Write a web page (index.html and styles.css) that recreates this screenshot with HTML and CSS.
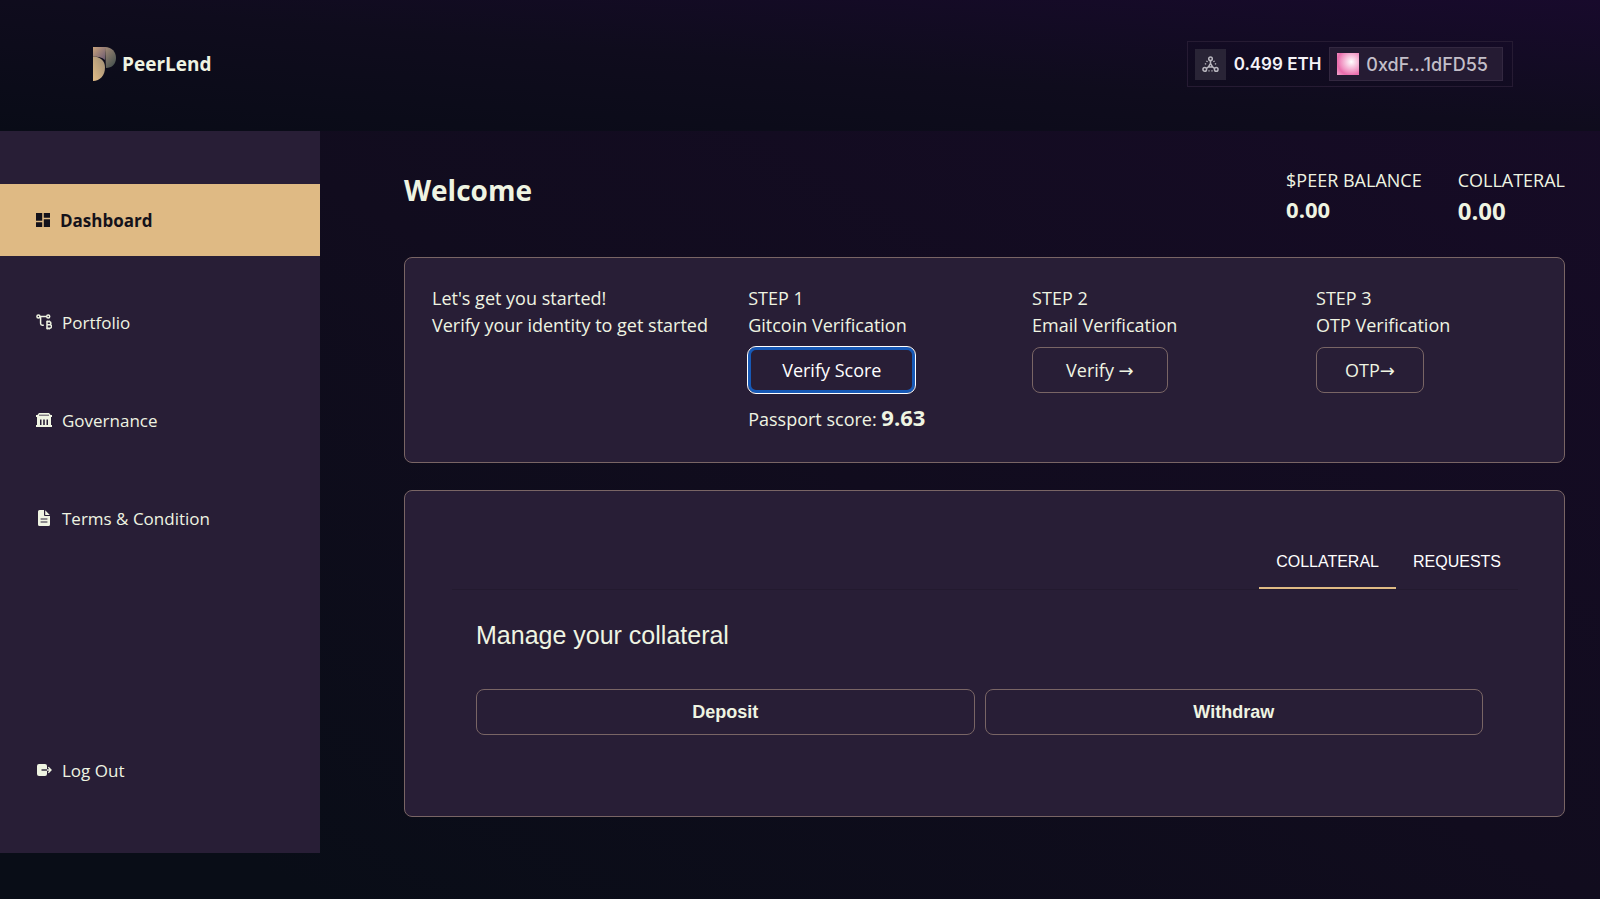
FILE: index.html
```html
<!DOCTYPE html>
<html lang="en">
<head>
    <meta charset="UTF-8">
    <meta name="viewport" content="width=device-width, initial-scale=1.0">
    <title>PeerLend</title>

    <link rel="stylesheet" href="styles.css">
</head>
<body>
    <header class="header">
        <a class="logo" href="#">
            <svg class="logo-mark" viewBox="0 0 24 34" aria-hidden="true">
                <defs>
                    <linearGradient id="bowl" x1="0" y1="0" x2="0.6" y2="1">
                        <stop offset="0" stop-color="#a58b78"/>
                        <stop offset="1" stop-color="#4a5450"/>
                    </linearGradient>
                    <linearGradient id="corner" x1="0" y1="0" x2="1" y2="1">
                        <stop offset="0" stop-color="#c9a47c"/>
                        <stop offset="1" stop-color="#6b5a72"/>
                    </linearGradient>
                    <linearGradient id="stem" x1="1" y1="0" x2="0" y2="1">
                        <stop offset="0" stop-color="#9d8d76"/>
                        <stop offset="1" stop-color="#e3bd86"/>
                    </linearGradient>
                </defs>
                <path fill="url(#bowl)" d="M12 0c7 0 11 5 11 11s-4 10-10 10z"/>
                <path fill="url(#corner)" d="M0 0h12v13C9 10 5 9.5 0 9.5z"/>
                <path fill="url(#stem)" d="M0 9.500c7 0 12 4 12 11 0 8-5 13.500-12 13.500z"/>
            </svg>
            PeerLend
        </a>

        <div class="wallet">
            <button class="wallet-network" type="button" aria-label="Network">
                <svg viewBox="0 0 16 16" fill="none" stroke="currentColor" stroke-width="1.4" aria-hidden="true">
                    <circle cx="8" cy="2.6" r="1.7"/>
                    <circle cx="2.6" cy="12.6" r="1.7"/>
                    <circle cx="13.4" cy="12.6" r="1.7"/>
                    <path d="M8 4.3v3.2M4.2 11.6 6.4 10M11.8 11.6 9.6 10M8 7l2 3.4H6z"/>
                    <path stroke-dasharray="1.2 1.6" d="M5 4.5 3 8M11 4.5 13 8M6 14h4"/>
                </svg>
            </button>
            <span class="wallet-balance">0.499 ETH</span>
            <button class="wallet-account" type="button">
                <span class="avatar"></span>
                0xdF...1dFD55
            </button>
        </div>
    </header>

    <div class="layout">
        <nav class="sidebar">
            <a class="nav-link active" href="#">
                <svg class="nav-icon" viewBox="3 3 18 18" fill="currentColor" aria-hidden="true">
                    <path d="M3 13h8V3H3zm0 8h8v-6H3zm10 0h8V11h-8zm0-18v6h8V3z"/>
                </svg>
                Dashboard
            </a>
            <a class="nav-link" href="#">
                <svg class="nav-icon" viewBox="0 0 16 16" fill="none" stroke="currentColor" stroke-width="1.5" aria-hidden="true">
                    <circle cx="2.4" cy="2.6" r="1.5"/>
                    <circle cx="12.2" cy="2.6" r="1.5"/>
                    <path d="M4 2.6h6.6M4.6 3v6.6q0 1.6 1.6 1.6h1.6"/>
                    <path d="M10.2 7.8h3.2a1.5 1.5 0 0 1 0 3h-2.2 2.6a1.6 1.6 0 0 1 0 3.4h-3.6M11 7.8v6.4M11.4 6.4v1.4M13.2 6.4v1.4M11.4 14.2v1.4M13.2 14.2v1.4"/>
                </svg>
                Portfolio
            </a>
            <a class="nav-link" href="#">
                <svg class="nav-icon" viewBox="0 0 16 16" aria-hidden="true">
                    <path fill="currentColor" fill-rule="evenodd" d="M3 1h10l1.6 2H16v2h-1v8h1v2H0v-2h1V5H0V3h1.4zM4 7.5V13h1.5V7.500zM7.200 7.500V13h1.600V7.500zM10.500 7.500V13H12V7.500z"/>
                    <path stroke="#281e36" stroke-width="0.8" d="M3 3.200h10"/>
                </svg>
                Governance
            </a>
            <a class="nav-link" href="#">
                <svg class="nav-icon" viewBox="0 0 16 16" aria-hidden="true">
                    <path fill="currentColor" d="M3.500 0H8v5q0 1 1 1h5v8.500q0 1.500-1.500 1.500h-9Q2 16 2 14.500v-13Q2 0 3.500 0zM9.200.3 13.800 5H9.200z"/>
                    <path stroke="#281e36" stroke-width="1.2" d="M4.600 9h6.800M4.600 12h6.800"/>
                </svg>
                Terms &amp; Condition
            </a>
            <a class="nav-link logout" href="#">
                <svg class="nav-icon" viewBox="0 0 16 16" fill="none" aria-hidden="true">
                    <rect x="1" y="2" width="10" height="12" rx="2" fill="currentColor"/>
                    <path stroke="#281e36" stroke-width="1.4" d="M5.500 8H11"/>
                    <path stroke="currentColor" stroke-width="1.4" d="M11 8h4M12.300 5.200 15 8l-2.700 2.800"/>
                </svg>
                Log Out
            </a>
        </nav>

        <main class="content">
            <div class="top">
                <h1 class="title">Welcome</h1>
                <div class="balances">
                    <div>
                        <p>$PEER BALANCE</p>
                        <p class="balance-value">0.00</p>
                    </div>
                    <div>
                        <p>COLLATERAL</p>
                        <p class="balance-value large">0.00</p>
                    </div>
                </div>
            </div>

            <section class="card steps">
                <div>
                    <p>Let's get you started!</p>
                    <p>Verify your identity to get started</p>
                </div>
                <div>
                    <p>STEP 1</p>
                    <p>Gitcoin Verification</p>
                    <button class="btn focused" type="button">Verify Score</button>
                    <p class="score">Passport score: <b>9.63</b></p>
                </div>
                <div>
                    <p>STEP 2</p>
                    <p>Email Verification</p>
                    <button class="btn" type="button">Verify <span class="arrow">→</span></button>
                </div>
                <div>
                    <p>STEP 3</p>
                    <p>OTP Verification</p>
                    <button class="btn narrow" type="button">OTP<span class="arrow">→</span></button>
                </div>
            </section>

            <section class="card manage">
                <div class="tabs" role="tablist">
                    <button class="tab active" type="button" role="tab" aria-selected="true">COLLATERAL</button>
                    <button class="tab" type="button" role="tab" aria-selected="false">REQUESTS</button>
                </div>
                <div class="panel" role="tabpanel">
                    <h2 class="panel-title">Manage your collateral</h2>
                    <div class="actions">
                        <button class="btn" type="button">Deposit</button>
                        <button class="btn" type="button">Withdraw</button>
                    </div>
                </div>
            </section>
        </main>
    </div>
</body>
</html>
```
FILE: styles.css
```css
* {
    box-sizing: border-box;
}

body {
    margin: 0;
    min-height: 100vh;

    font-family: "Open Sans", sans-serif;
    font-size: 18px;
    line-height: 27px;
    color: #eff4e2;

    background: linear-gradient(to top right, #090d17 10%, #110c1e 50%, #170b27);
}

h1,
h2,
p {
    margin: 0;
}

a {
    color: inherit;
    text-decoration: none;
}

button {
    font: inherit;
    color: inherit;
    background: none;
}

.header {
    padding: 41px 87px 44px 93px;

    display: flex;
    align-items: center;
    justify-content: space-between;

    background: linear-gradient(to top right, #090c17, #0f0c1d 50%, #180a2c);
}

.logo {
    display: flex;
    align-items: center;
    gap: 5px;

    font-size: 19px;
    font-weight: bold;
}

.logo-mark {
    width: 24px;
    height: 34px;
}

.wallet {
    padding: 5px 9px 5px 7px;

    display: flex;
    align-items: center;
    gap: 8px;

    font-family: Inter, sans-serif;
    font-size: 17px;

    border: 1px solid #261b33;
}

.wallet-network {
    padding: 7px;
    width: 31px;
    height: 31px;

    color: #b9b7bf;

    background-color: #292436;
    border: 0;
}

.wallet-network svg {
    display: block;
}

.wallet-balance {
    font-weight: 600;
    color: #f5f3f8;
}

.wallet-account {
    padding: 0 14px 0 7px;
    height: 34px;

    display: flex;
    align-items: center;
    gap: 7px;

    font-size: 18px;
    font-weight: 500;
    color: #c3bfc9;

    background-color: #251b33;
    border: 1px solid #332840;
}

.avatar {
    width: 22px;
    height: 22px;

    background: radial-gradient(circle at 65% 40%, #fff, #f08fc0 55%, #ea6cac 70%, #f3a6cb);
}

.layout {
    display: flex;
    align-items: flex-start;
}

.sidebar {
    padding: 53px 0 47px;
    width: 20%;

    display: flex;
    flex-direction: column;

    font-size: 17px;

    background-color: #281e36;
}

.nav-link {
    margin-bottom: 26px;
    padding: 0 36px;
    height: 72px;

    display: flex;
    align-items: center;
    gap: 10px;
}

.nav-link.active {
    margin-bottom: 30px;

    font-weight: bold;
    color: #14121a;

    background-color: #dfba84;
}

.nav-link.active .nav-icon {
    width: 14px;
}

.nav-icon {
    width: 16px;
    height: 16px;
}

.nav-link.logout {
    margin: 154px 0 0;
}

.content {
    padding: 36px 35px 83px 84px;
    flex: 1;
}

.top {
    margin-bottom: 29px;

    display: flex;
    justify-content: space-between;
}

.title {
    font-size: 28px;
    line-height: 46px;
}

.balances {
    display: flex;
    gap: 36px;
}

.balance-value {
    font-size: 22px;
    font-weight: bold;
    line-height: 30px;
}

.balance-value.large {
    font-size: 24px;
    line-height: 34px;
}

.card {
    background-color: #281e36;
    border: 1px solid #796565;
    border-radius: 8px;
}

.steps {
    margin-bottom: 27px;
    padding: 27px 0 29px 27px;

    display: grid;
    grid-template-columns: 1.13fr repeat(3, 1fr);
    gap: 36px;
}

.btn {
    padding: 0 33px;
    height: 46px;

    border: 1px solid #796565;
    border-radius: 8px;
}

.steps .btn {
    margin-top: 8px;
}

.btn.narrow {
    padding: 0 28px;
}

.btn.focused {
    padding: 0 31px;

    color: #fff;

    border: 3px solid #1759b6;
    outline: 1px solid #fff;
}

.arrow {
    font-family: "DejaVu Sans", sans-serif;
    line-height: 1;
}

.score {
    margin-top: 13px;
}

.score b {
    font-size: 22px;
    line-height: 1;
}

.manage {
    padding: 44px 46px 81px 47px;

    font-family: "Liberation Sans", Arial, sans-serif;
}

.tabs {
    display: flex;
    justify-content: flex-end;

    border-bottom: 1px solid #231a2f;
}

.tab {
    padding: 0 17px;
    height: 54px;

    font-size: 16px;
    color: #fff;

    border: 0;
    border-bottom: 2px solid transparent;
}

.tab.active {
    border-color: #dfba84;
}

.panel {
    padding: 31px 35px 0 24px;
}

.panel-title {
    margin-bottom: 40px;

    font-size: 25px;
    font-weight: normal;
    line-height: 28px;
}

.actions {
    display: flex;
    gap: 10px;
}

.actions .btn {
    flex: 1;

    font-weight: bold;
}
```
